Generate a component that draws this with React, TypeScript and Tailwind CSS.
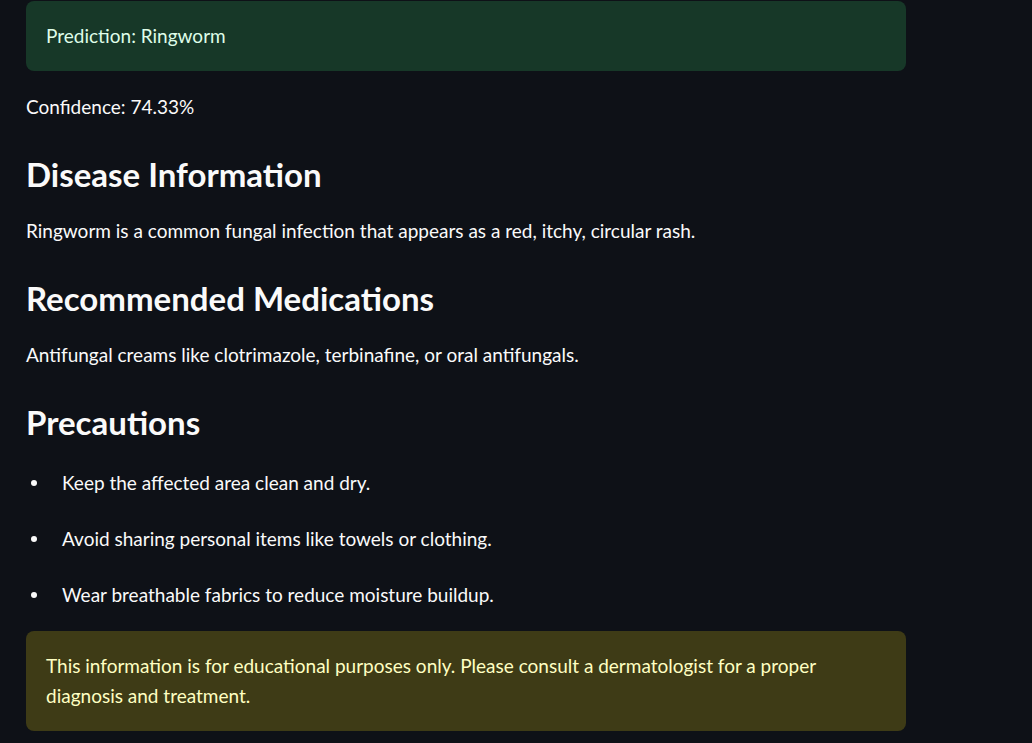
import React from 'react';

const precautions = [
  'Keep the affected area clean and dry.',
  'Avoid sharing personal items like towels or clothing.',
  'Wear breathable fabrics to reduce moisture buildup.',
];

const App: React.FC = () => {
  return (
    <div
      className="min-h-screen w-full bg-[#0e1117] text-[#fafafa] px-[26px] pt-[1px]"
      style={{ fontFamily: 'Lato, "Noto Sans", sans-serif' }}
    >
      <div className="w-[880px] flex flex-col text-[19px] leading-[30px]">
        {/* success alert */}
        <div className="h-[70px] rounded-lg bg-[#173828] px-5 flex items-center text-[#dffde9]">
          Prediction: Ringworm
        </div>

        <p className="mt-[21px]">Confidence: 74.33%</p>

        <h2 className="mt-[30px] text-[33px] leading-[44px] font-bold">Disease Information</h2>
        <p className="mt-[20px]">
          Ringworm is a common fungal infection that appears as a red, itchy, circular rash.
        </p>

        <h2 className="mt-[30px] text-[33px] leading-[44px] font-bold">Recommended Medications</h2>
        <p className="mt-[20px]">
          Antifungal creams like clotrimazole, terbinafine, or oral antifungals.
        </p>

        <h2 className="mt-[30px] text-[33px] leading-[44px] font-bold">Precautions</h2>
        <ul className="mt-[24px] flex flex-col gap-[26px]">
          {precautions.map((item) => (
            <li key={item} className="flex items-center">
              <span className="w-[36px] pl-[5px] flex items-center">
                <span className="block w-[6px] h-[6px] rounded-full bg-[#fafafa]" />
              </span>
              <span>{item}</span>
            </li>
          ))}
        </ul>

        {/* warning alert */}
        <div className="mt-[21px] rounded-lg bg-[#3e3b16] px-5 py-5 text-[#ffffc2]">
          This information is for educational purposes only. Please consult a dermatologist for a proper
          diagnosis and treatment.
        </div>
      </div>
    </div>
  );
};

export default App;
